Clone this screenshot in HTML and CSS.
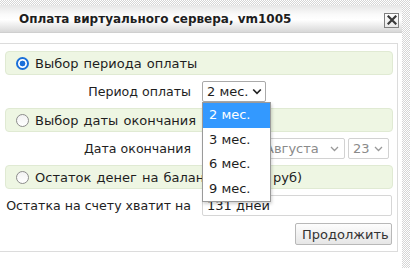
FILE: index.html
```html
<!DOCTYPE html>
<html lang="ru">
<head>
    <meta charset="UTF-8">
    <meta name="viewport" content="width=device-width, initial-scale=1.0">
    <title>Оплата виртуального сервера</title>
    <link rel="stylesheet" href="styles.css">
</head>
<body>
    <div class="dialog">
        <div class="titlebar">
            <span class="title">Оплата виртуального сервера, vm1005</span>
            <button class="close" type="button" title="Закрыть">
                <svg width="10" height="10" viewBox="0 0 10 10"><path d="M1.5 1.5L8.5 8.5M8.5 1.5L1.5 8.5" stroke="#3a3a3a" stroke-width="2.2" stroke-linecap="square"/></svg>
            </button>
        </div>

        <div class="content">
            <form class="panel">
                <!-- период -->
                <div class="section-head"><span class="radio checked"></span>Выбор периода оплаты</div>
                <div class="field-row">
                    <span class="field-label">Период оплаты</span>
                    <div class="select-holder">
                        <div class="select period">
                            <span>2 мес.</span>
                            <svg class="chevron" width="10" height="7" viewBox="0 0 10 7"><path d="M1.2 1.5l3.8 3.8 3.8-3.8" fill="none" stroke="#222" stroke-width="1.7"/></svg>
                        </div>
                        <ul class="options">
                            <li class="active">2 мес.</li>
                            <li>3 мес.</li>
                            <li>6 мес.</li>
                            <li>9 мес.</li>
                        </ul>
                    </div>
                </div>

                <!-- дата окончания -->
                <div class="section-head"><span class="radio"></span>Выбор даты окончания</div>
                <div class="field-row">
                    <span class="field-label">Дата окончания</span>
                    <div class="controls">
                        <div class="select disabled year">
                            <span>2025</span>
                            <svg class="chevron" width="9" height="6" viewBox="0 0 9 6"><path d="M1 1l3.5 3.5L8 1" fill="none" stroke="#999" stroke-width="1.3"/></svg>
                        </div>
                        <div class="select disabled month">
                            <span>Августа</span>
                            <svg class="chevron" width="9" height="6" viewBox="0 0 9 6"><path d="M1 1l3.5 3.5L8 1" fill="none" stroke="#999" stroke-width="1.3"/></svg>
                        </div>
                        <div class="select disabled day">
                            <span>23</span>
                            <svg class="chevron" width="9" height="6" viewBox="0 0 9 6"><path d="M1 1l3.5 3.5L8 1" fill="none" stroke="#999" stroke-width="1.3"/></svg>
                        </div>
                    </div>
                </div>

                <!-- остаток -->
                <div class="section-head"><span class="radio"></span>Остаток денег на балансе (1 310 руб)</div>
                <div class="field-row">
                    <span class="field-label">Остатка на счету хватит на</span>
                    <input class="days" type="text" value="131 дней" readonly>
                </div>

                <div class="actions">
                    <button type="button" class="btn">Продолжить</button>
                </div>
            </form>
        </div>
    </div>
</body>
</html>
```

FILE: styles.css
```css
body {
    margin: 0;
    font-family: "DejaVu Sans", Verdana, sans-serif;
    font-size: 12px;
    color: #1e1e1e;
    background: repeating-conic-gradient(#d6d6d6 0 25%, #fff 0 50%) 0 0 / 2px 2px;
    overflow: hidden;
    height: 268px;
}

.dialog {
    width: 410px;
    margin: 5px 0 0 -8px;
    background: #fff;
    height: 280px;
}

.titlebar {
    height: 27px;
    display: flex;
    align-items: center;
    justify-content: space-between;
    padding: 0 3px 0 27px;
    background: linear-gradient(#e6e6e6, #fafafa 35%, #fff 55%, #d8d8d8);
    border-bottom: 1px solid #cfcfcf;
}

.title {
    font-weight: bold;
    font-size: 12px;
    color: #1e1e1e;
}

.close {
    width: 15px;
    height: 15px;
    margin-top: 3px;
    padding: 0;
    border: 1px solid #808080;
    background: linear-gradient(#fff, #e9e9e9);
    display: flex;
    align-items: center;
    justify-content: center;
    cursor: pointer;
}

.content {
    padding-top: 10px;
}

.panel {
    margin: 0 4px 0 7px;
    padding: 7px 4px 6px 5px;
    border: 1px solid #dcdcdc;
    background: #fff;
}

.section-head {
    height: 22px;
    display: flex;
    align-items: center;
    gap: 6px;
    padding-left: 10px;
    background: #eef6e3;
    border: 1px solid #e0ead3;
    border-radius: 4px;
    font-size: 13px;
    word-spacing: 1px;
    color: #1e1e1e;
    white-space: nowrap;
}

.radio {
    width: 11px;
    height: 11px;
    border: 1px solid #8c8c8c;
    border-radius: 50%;
    background: linear-gradient(#f2f2f2, #fff);
    box-sizing: content-box;
}

.radio.checked {
    width: 9px;
    height: 9px;
    border: 2px solid #1a6fd9;
    background: radial-gradient(circle, #1a6fd9 0 2.6px, #fff 3.2px);
}

.field-row {
    display: flex;
    align-items: center;
    gap: 11px;
    margin: 6px 0;
    height: 21px;
}

.field-label {
    width: 186px;
    text-align: right;
    font-size: 12.6px;
    color: #1e1e1e;
    white-space: nowrap;
}

.select-holder {
    position: relative;
}

.select {
    height: 19px;
    display: flex;
    align-items: center;
    justify-content: space-between;
    padding: 0 3px 0 4px;
    border: 1px solid #a9a9a9;
    border-radius: 2px;
    background: #fff;
    font-size: 13px;
    box-sizing: content-box;
}

.select.period {
    width: 55px;
}

.controls {
    display: flex;
    gap: 3px;
}

.select.disabled {
    color: #8a8a8a;
    border-color: #d2d2d2;
    padding-right: 5px;
}

.select.year {
    width: 44px;
}

.select.month {
    width: 74px;
}

.select.day {
    width: 30px;
}

.options {
    position: absolute;
    top: 21px;
    left: 0;
    width: 67px;
    margin: 0;
    padding: 0;
    list-style: none;
    background: #fff;
    border: 1px solid #9a9a9a;
    box-shadow: 1px 2px 3px rgba(0, 0, 0, 0.18);
    z-index: 5;
}

.options li {
    height: 24.5px;
    line-height: 24.5px;
    padding-left: 6px;
    font-size: 13px;
}

.options li.active {
    background: #3399ff;
    color: #fff;
}

.days {
    width: 180px;
    height: 19px;
    padding: 0 4px;
    border: 1px solid #d6d6d6;
    border-radius: 2px;
    font-family: inherit;
    font-size: 13px;
    color: #1e1e1e;
    box-sizing: content-box;
}

.actions {
    display: flex;
    justify-content: flex-end;
    margin-top: 7px;
    padding-right: 1px;
}

.btn {
    width: 97px;
    height: 22px;
    border: 1px solid #b8b8b8;
    border-radius: 2px;
    background: linear-gradient(#fdfdfd, #e6e6e6);
    font-family: inherit;
    font-size: 13px;
    color: #333;
    cursor: pointer;
}
```
